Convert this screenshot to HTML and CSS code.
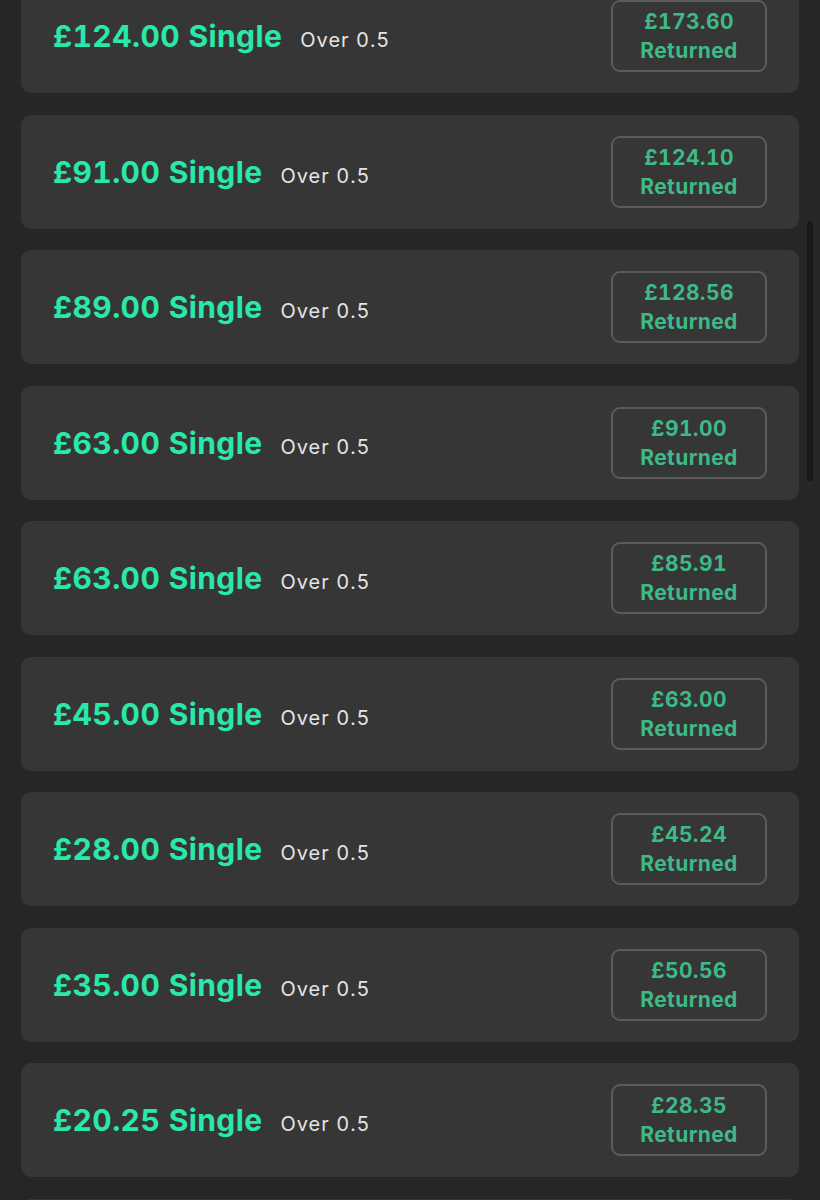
FILE: index.html
```html
<!DOCTYPE html>
<html lang="en">
<head>
  <meta charset="UTF-8">
  <title>Settled Bets</title>
  <link rel="stylesheet" href="styles.css">
</head>
<body>
  <div class="bets">
    <div class="bet">
      <div class="bet-info"><span class="stake">£124.00 Single</span><span class="market">Over 0.5</span></div>
      <div class="returned"><span>£173.60</span><span>Returned</span></div>
    </div>
    <div class="bet">
      <div class="bet-info"><span class="stake">£91.00 Single</span><span class="market">Over 0.5</span></div>
      <div class="returned"><span>£124.10</span><span>Returned</span></div>
    </div>
    <div class="bet">
      <div class="bet-info"><span class="stake">£89.00 Single</span><span class="market">Over 0.5</span></div>
      <div class="returned"><span>£128.56</span><span>Returned</span></div>
    </div>
    <div class="bet">
      <div class="bet-info"><span class="stake">£63.00 Single</span><span class="market">Over 0.5</span></div>
      <div class="returned"><span>£91.00</span><span>Returned</span></div>
    </div>
    <div class="bet">
      <div class="bet-info"><span class="stake">£63.00 Single</span><span class="market">Over 0.5</span></div>
      <div class="returned"><span>£85.91</span><span>Returned</span></div>
    </div>
    <div class="bet">
      <div class="bet-info"><span class="stake">£45.00 Single</span><span class="market">Over 0.5</span></div>
      <div class="returned"><span>£63.00</span><span>Returned</span></div>
    </div>
    <div class="bet">
      <div class="bet-info"><span class="stake">£28.00 Single</span><span class="market">Over 0.5</span></div>
      <div class="returned"><span>£45.24</span><span>Returned</span></div>
    </div>
    <div class="bet">
      <div class="bet-info"><span class="stake">£35.00 Single</span><span class="market">Over 0.5</span></div>
      <div class="returned"><span>£50.56</span><span>Returned</span></div>
    </div>
    <div class="bet">
      <div class="bet-info"><span class="stake">£20.25 Single</span><span class="market">Over 0.5</span></div>
      <div class="returned"><span>£28.35</span><span>Returned</span></div>
    </div>
    <!-- next bet, only its top edge is in view -->
    <div class="bet"></div>
  </div>
  <div class="scrollbar"></div>
</body>
</html>
```

FILE: styles.css
```css
html, body {
  margin: 0;
  height: 1200px;
  overflow: hidden;
}
body {
  background: #262626;
  font-family: Inter, "Noto Sans", sans-serif;
  font-variant-numeric: tabular-nums;
  position: relative;
}
.bets {
  display: flex;
  flex-direction: column;
  gap: 21.5px;
  padding: 0 21px;
  margin-top: -21px;
}
.bet {
  height: 114px;
  flex-shrink: 0;
  box-sizing: border-box;
  background: #363636;
  border-radius: 10px;
  display: flex;
  align-items: center;
  justify-content: space-between;
  padding: 0 32px;
}
.bet-info {
  display: flex;
  align-items: baseline;
  gap: 18px;
}
.stake {
  color: #2ae8a9;
  font-size: 30px;
  font-weight: 700;
  letter-spacing: 0.4px;
}
.market {
  color: #e4e4e4;
  font-size: 20px;
  letter-spacing: 1px;
}
.returned {
  width: 156px;
  height: 72px;
  box-sizing: border-box;
  border: 2px solid #5b5b5b;
  border-radius: 9px;
  display: flex;
  flex-direction: column;
  align-items: center;
  justify-content: center;
  color: #3dba86;
  font-size: 21px;
  font-weight: 700;
  line-height: 29px;
  letter-spacing: 0.4px;
}
.scrollbar {
  position: absolute;
  left: 807px;
  top: 221px;
  width: 6px;
  height: 260px;
  border-radius: 3px;
  background: #181818;
}
```
